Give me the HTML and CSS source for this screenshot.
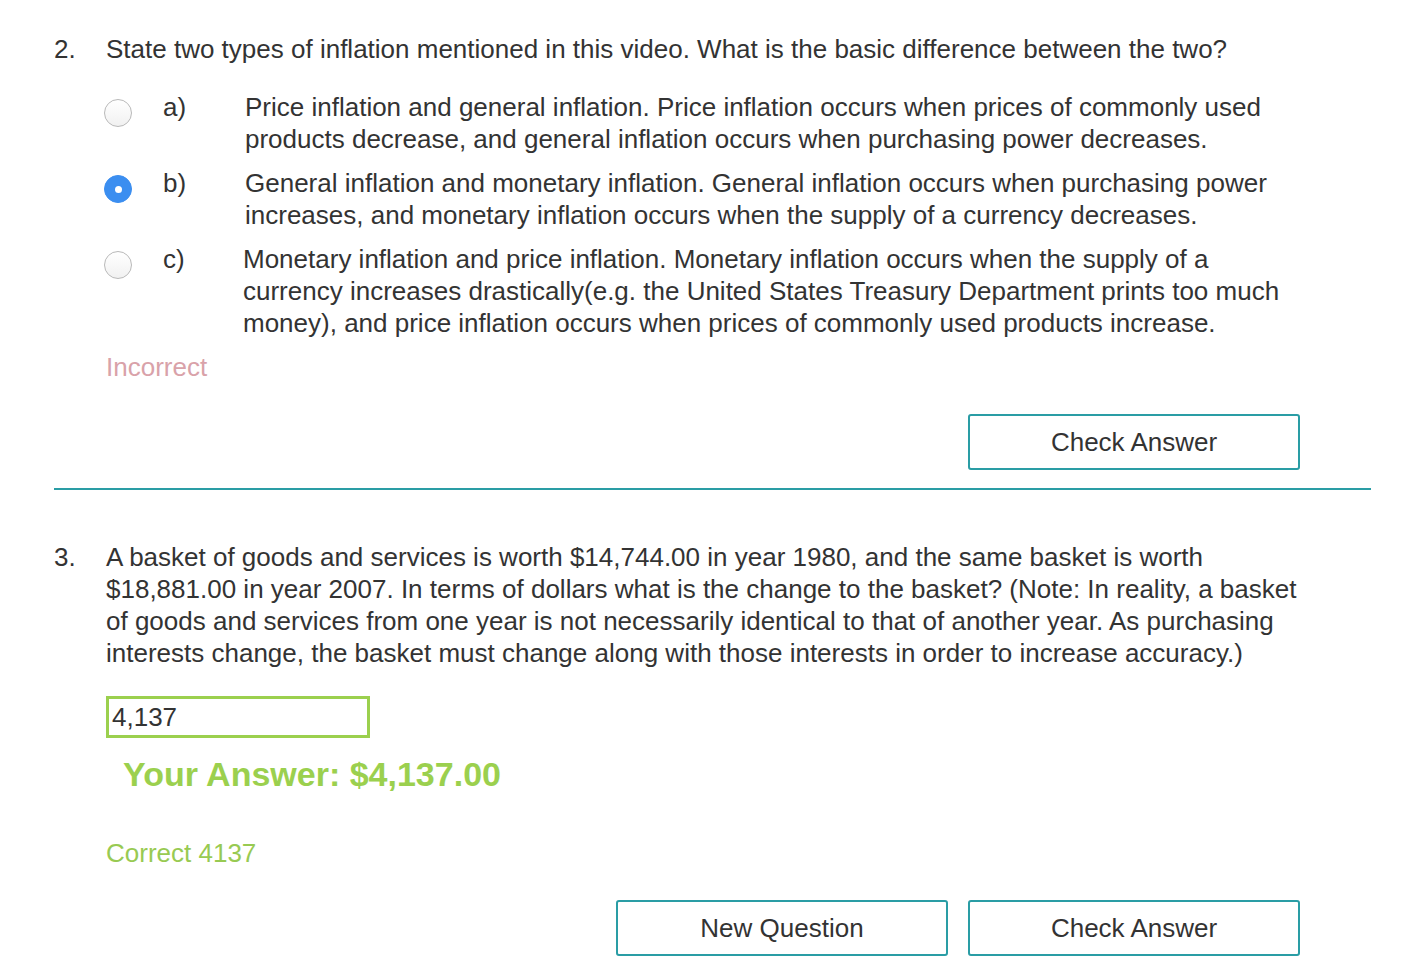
FILE: index.html
```html
<!DOCTYPE html>
<html lang="en">
<head>
<meta charset="utf-8">
<title>Quiz</title>
<link rel="stylesheet" href="styles.css">
</head>
<body>
<div class="page">
  <section class="question q2">
    <div class="num">2.</div>
    <div class="body">
      <p class="prompt">State two types of inflation mentioned in this video. What is the basic difference between the two?</p>
      <div class="options">
        <div class="option">
          <span class="radio"></span>
          <span class="label">a)</span>
          <span class="text">Price inflation and general inflation. Price inflation occurs when prices of commonly used products decrease, and general inflation occurs when purchasing power decreases.</span>
        </div>
        <div class="option">
          <span class="radio checked"></span>
          <span class="label">b)</span>
          <span class="text">General inflation and monetary inflation. General inflation occurs when purchasing power increases, and monetary inflation occurs when the supply of a currency decreases.</span>
        </div>
        <div class="option">
          <span class="radio"></span>
          <span class="label">c)</span>
          <span class="text text-c">Monetary inflation and price inflation. Monetary inflation occurs when the supply of a currency increases drastically(e.g. the United States Treasury Department prints too much money), and price inflation occurs when prices of commonly used products increase.</span>
        </div>
      </div>
      <div class="feedback incorrect">Incorrect</div>
      <div class="actions first-actions">
        <button class="btn">Check Answer</button>
      </div>
    </div>
  </section>
  <hr class="divider">
  <section class="question q3">
    <div class="num">3.</div>
    <div class="body">
      <p class="prompt">A basket of goods and services is worth $14,744.00 in year 1980, and the same basket is worth $18,881.00 in year 2007. In terms of dollars what is the change to the basket? (Note: In reality, a basket of goods and services from one year is not necessarily identical to that of another year. As purchasing interests change, the basket must change along with those interests in order to increase accuracy.)</p>
      <div class="answer-box">4,137</div>
      <div class="your-answer">Your Answer: $4,137.00</div>
      <div class="feedback correct">Correct 4137</div>
      <div class="actions last-actions">
        <button class="btn">New Question</button>
        <button class="btn">Check Answer</button>
      </div>
    </div>
  </section>
</div>
</body>
</html>
```
FILE: styles.css
```css
html, body {
  margin: 0;
  padding: 0;
  background: #ffffff;
}

body {
  font-family: "Liberation Sans", Arial, Helvetica, sans-serif;
  font-size: 26px;
  line-height: 32px;
  color: #333333;
}

.page {
  padding: 33px 55px 0 54px;
}

.question {
  display: grid;
  grid-template-columns: 52px 1194px;
}

.prompt {
  margin: 0;
}

.options {
  margin-top: 26px;
  display: flex;
  flex-direction: column;
  gap: 12px;
}

.option {
  display: grid;
  grid-template-columns: 59px 82px 1055px;
  margin-left: -2px;
}

.radio {
  width: 26px;
  height: 26px;
  margin-top: 8px;
  border-radius: 50%;
  border: 1px solid #b9b9b9;
  background: linear-gradient(#ffffff, #f1f1f1);
  box-sizing: content-box;
  position: relative;
}

.radio.checked {
  border-color: #3b8ef0;
  background: #3b8ef0;
}

.radio.checked::after {
  content: "";
  position: absolute;
  left: 10px;
  top: 10px;
  width: 7px;
  height: 7px;
  border-radius: 50%;
  background: #ffffff;
}

.label {
  display: block;
}

.text-c {
  margin-left: -2px;
}

.feedback {
  margin-top: 12px;
}

.incorrect {
  color: #d9a2a9;
}

.correct {
  color: #98ca52;
  margin-top: 43px;
}

.actions {
  display: flex;
  justify-content: flex-end;
  gap: 20px;
  margin-top: 31px;
}

.btn {
  width: 332px;
  height: 56px;
  border: 2px solid #2a9da5;
  border-radius: 3px;
  background: #ffffff;
  font-family: "Liberation Sans", Arial, Helvetica, sans-serif;
  font-size: 26px;
  color: #333333;
  padding: 0;
  cursor: pointer;
}

.divider {
  margin: 18px 0 0 0;
  border: none;
  height: 2px;
  background: #2a9da5;
  width: 1317px;
}

.q3 {
  margin-top: 51px;
}

.answer-box {
  margin-top: 27px;
  width: 264px;
  height: 42px;
  box-sizing: border-box;
  border: 3px solid #9bd04e;
  padding: 0 0 0 3px;
  line-height: 36px;
  color: #333333;
}

.your-answer {
  margin-top: 16px;
  margin-left: 17px;
  font-weight: bold;
  font-size: 34px;
  line-height: 40px;
  color: #9bd04e;
}
```
